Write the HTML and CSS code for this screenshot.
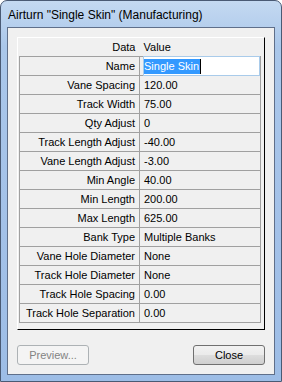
FILE: index.html
```html
<!DOCTYPE html>
<html lang="en">
<head>
    <meta charset="UTF-8">
    <title>Airturn "Single Skin" (Manufacturing)</title>
    <link rel="stylesheet" href="styles.css">
</head>
<body>

    <!-- Window -->
    <div class="window">
        <div class="title-bar">Airturn "Single Skin" (Manufacturing)</div>

        <div class="client">
            <!-- Property Grid -->
            <div class="grid-box">
                <table class="grid">
                    <tr class="grid-head">
                        <td class="label">Data</td>
                        <td class="value">Value</td>
                    </tr>
                    <tr>
                        <td class="label">Name</td>
                        <td class="value">
                            <div class="editor"><span class="selected">Single Skin</span></div>
                        </td>
                    </tr>
                    <tr><td class="label">Vane Spacing</td><td class="value">120.00</td></tr>
                    <tr><td class="label">Track Width</td><td class="value">75.00</td></tr>
                    <tr><td class="label">Qty Adjust</td><td class="value">0</td></tr>
                    <tr><td class="label">Track Length Adjust</td><td class="value">-40.00</td></tr>
                    <tr><td class="label">Vane Length Adjust</td><td class="value">-3.00</td></tr>
                    <tr><td class="label">Min Angle</td><td class="value">40.00</td></tr>
                    <tr><td class="label">Min Length</td><td class="value">200.00</td></tr>
                    <tr><td class="label">Max Length</td><td class="value">625.00</td></tr>
                    <tr><td class="label">Bank Type</td><td class="value">Multiple Banks</td></tr>
                    <tr><td class="label">Vane Hole Diameter</td><td class="value">None</td></tr>
                    <tr><td class="label">Track Hole Diameter</td><td class="value">None</td></tr>
                    <tr><td class="label">Track Hole Spacing</td><td class="value">0.00</td></tr>
                    <tr><td class="label">Track Hole Separation</td><td class="value">0.00</td></tr>
                </table>
            </div>

            <!-- Buttons -->
            <div class="buttons">
                <button class="btn" disabled>Preview...</button>
                <button class="btn">Close</button>
            </div>
        </div>
    </div>

</body>
</html>
```

FILE: styles.css
```css
* {
    margin: 0;
    padding: 0;
    box-sizing: border-box;
}

body {
    width: 282px;
    height: 382px;
    background: #ffffff;
    font-family: "Liberation Sans", Arial, sans-serif;
    font-size: 11px;
    color: #000;
}

/* Window Frame */
.window {
    width: 282px;
    height: 382px;
    border: 1px solid #4a5a74;
    border-radius: 7px 7px 0 0;
    background: linear-gradient(180deg, #c4d9f1 0%, #aac7ea 12%, #a3c1e8 60%, #9dbde6 100%);
    padding: 0 6px 6px 6px;
    display: flex;
    flex-direction: column;
}

.title-bar {
    height: 26px;
    padding: 7px 0 0 1px;
    font-size: 12px;
    color: #000;
    white-space: nowrap;
}

/* Client Area */
.client {
    flex: 1;
    background: #f0f0f0;
    border: 1px solid #5f6f8a;
    padding: 9px;
    display: flex;
    flex-direction: column;
}

/* Property Grid */
.grid-box {
    height: 293px;
    border-top: 1px solid #ffffff;
    border-left: 1px solid #ffffff;
    border-right: 1px solid #000000;
    border-bottom: 1px solid #000000;
    padding: 0 3px 0 1px;
}

.grid {
    width: 242px;
    border-collapse: collapse;
}

.grid td {
    height: 19px;
    border: 1px solid #a0a0a0;
    padding: 0;
    white-space: nowrap;
}

.grid td.label {
    width: 120px;
    text-align: right;
    padding-right: 4px;
}

.grid td.value {
    padding-left: 4px;
    position: relative;
}

.grid-head td {
    height: 18px;
    border: none;
    border-bottom: 1px solid #a0a0a0;
}

.grid-head td.label {
    padding-right: 4px;
}

/* Name Editor */
.editor {
    position: absolute;
    left: 3px;
    top: -1px;
    right: 0;
    bottom: -1px;
    background: #ffffff;
    border: 1px solid #a9cbea;
    padding: 2px 0 0 0;
}

.selected {
    display: inline-block;
    background: #3399ff;
    color: #ffffff;
    height: 15px;
    line-height: 15px;
    padding: 0 1px 0 0;
    border-right: 1px solid #000;
}

/* Buttons */
.buttons {
    display: flex;
    justify-content: space-between;
    margin-top: 15px;
}

.btn {
    width: 72px;
    height: 20px;
    border: 1px solid #707070;
    border-radius: 3px;
    background: linear-gradient(180deg, #f2f2f2 0%, #ebebeb 48%, #dddddd 52%, #cfcfcf 100%);
    font-family: "Liberation Sans", Arial, sans-serif;
    font-size: 11px;
    color: #000;
}

.btn:disabled {
    border-color: #adb2b5;
    background: #f4f4f4;
    color: #838383;
}
```
